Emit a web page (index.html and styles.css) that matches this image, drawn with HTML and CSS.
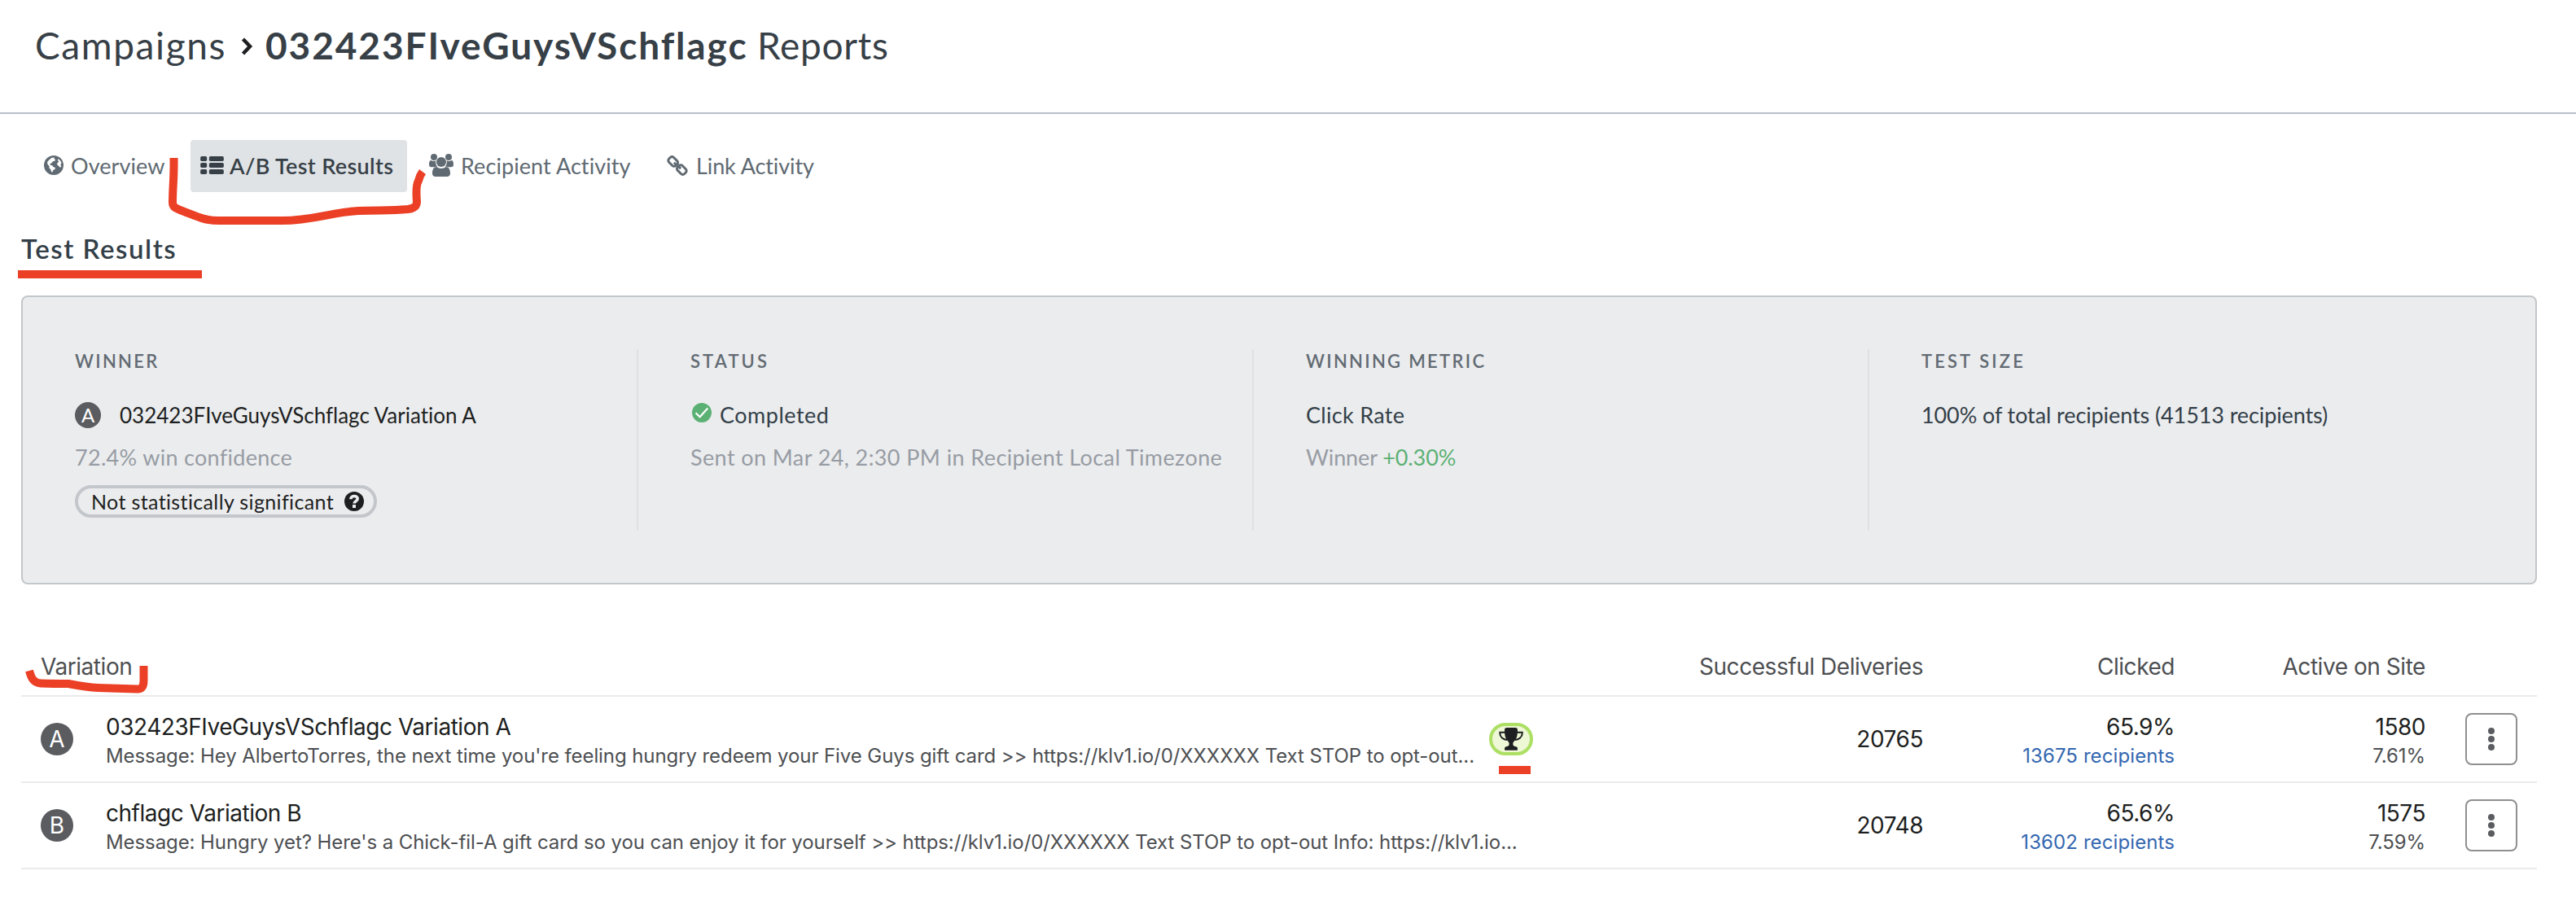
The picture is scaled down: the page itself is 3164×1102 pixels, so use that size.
FILE: index.html
```
<!DOCTYPE html>
<html lang="en">
<head>
    <meta charset="UTF-8">
    <meta name="viewport" content="width=device-width, initial-scale=1.0">
    <title>Campaign Reports</title>
    <link rel="stylesheet" href="styles.css">
</head>
<body>

    <header class="page-header">
        <h1>
            <span class="crumb">Campaigns</span>
            <svg class="chevron" viewBox="0 0 16 22"><path d="M3.500 2 L12 11 L3.500 20" fill="none" stroke="#1d1f21" stroke-width="4.5"/></svg>
            <strong>032423FIveGuysVSchflagc</strong>
            <span class="page-name">Reports</span>
        </h1>
    </header>

    <nav class="tabs">
        <a class="tab tab-overview">
            <svg width="24" height="24" viewBox="0 0 72 72">
                <circle cx="36" cy="36" r="36" fill="#606a72"/>
                <path fill="#fff" d="M28 9 L38 7 L37 12 L42 14 L40 20 L33 22 L28 28 L23 31 L23 36 L30 36 L34 42 L42 45 L40 51 L34 54 L31 62 L27 60 L25 52 L19 46 L20 40 L14 34 L12 25 L18 17 Z"/>
                <path fill="#fff" d="M52 12 L60 19 L65 28 L61 33 L64 41 L59 44 L54 38 L49 35 L49 28 L55 23 L51 18 Z"/>
            </svg>
            <span>Overview</span>
        </a>
        <a class="tab tab-results active">
            <svg width="29" height="22" viewBox="0 0 86 66" fill="#373f47">
                <rect width="24" height="18" rx="5"/><rect x="32" width="54" height="18" rx="5"/>
                <rect y="24" width="24" height="18" rx="5"/><rect x="32" y="24" width="54" height="18" rx="5"/>
                <rect y="48" width="24" height="18" rx="5"/><rect x="32" y="48" width="54" height="18" rx="5"/>
            </svg>
            <span>A/B Test Results</span>
        </a>
        <a class="tab tab-recipients">
            <svg width="30" height="28" viewBox="0 0 90 84" fill="#606a72">
                <circle cx="18" cy="12" r="12"/>
                <circle cx="72" cy="12" r="12"/>
                <circle cx="45" cy="30" r="18"/>
                <path d="M0 40 C0 30 2 24 7 24 C12 28 20 28 25 25 C23 34 26 42 31 47 C24 47 19 48 16 49 H8 C3 49 0 46 0 40 Z"/>
                <path d="M90 40 C90 30 88 24 83 24 C78 28 70 28 65 25 C67 34 64 42 59 47 C66 47 71 48 74 49 H82 C87 49 90 46 90 40 Z"/>
                <path d="M12 72 C12 58 17 48 28 48 C38 56 52 56 62 48 C73 48 78 58 78 72 C78 80 73 84 66 84 H24 C17 84 12 80 12 72 Z"/>
            </svg>
            <span>Recipient Activity</span>
        </a>
        <a class="tab tab-links">
            <svg width="26" height="25" viewBox="0 0 77 76" fill="none" stroke="#606a72" stroke-width="9">
                <rect x="4" y="10" width="36" height="25" rx="9" transform="rotate(45 22 23)"/>
                <rect x="37" y="41" width="36" height="25" rx="9" transform="rotate(45 55 53)"/>
                <path d="M26 27 L37 38"/>
                <path d="M41 39 L51 49"/>
            </svg>
            <span>Link Activity</span>
        </a>
    </nav>

    <main>
        <h2>Test Results</h2>

        <section class="summary">
            <div class="summary-col">
                <h3 class="h-winner">Winner</h3>
                <div class="line winner-line">
                    <span class="badge small">A</span>
                    <span class="winner-name">032423FIveGuysVSchflagc Variation A</span>
                </div>
                <div class="line muted confidence">72.4% win confidence</div>
                <div class="pill">
                    <span>Not statistically significant</span>
                    <svg width="24" height="24" viewBox="0 0 24 24">
                        <circle cx="12" cy="12" r="12" fill="#1d1f21"/>
                        <path d="M7.8 9.2 C8 4.2 16.2 4.4 16.2 8.8 C16.2 11.8 12 11.6 12 14.6" fill="none" stroke="#ebecee" stroke-width="3.6"/>
                        <rect x="10" y="16" width="4" height="4" fill="#ebecee"/>
                    </svg>
                </div>
            </div>
            <div class="summary-col">
                <h3 class="h-status">Status</h3>
                <div class="line status-line">
                    <svg width="24" height="24" viewBox="0 0 24 24">
                        <circle cx="12" cy="12" r="12" fill="#5bb174"/>
                        <path d="M4.5 12.2 L9.6 17.2 L19.3 6.6" fill="none" stroke="#fff" stroke-width="2.2"/>
                    </svg>
                    <span>Completed</span>
                </div>
                <div class="line muted sent">Sent on Mar 24, 2:30 PM in Recipient Local Timezone</div>
            </div>
            <div class="summary-col">
                <h3 class="h-metric">Winning Metric</h3>
                <div class="line click-rate">Click Rate</div>
                <div class="line muted metric">Winner <span class="gain">+0.30%</span></div>
            </div>
            <div class="summary-col">
                <h3 class="h-size">Test Size</h3>
                <div class="line size">100% of total recipients (41513 recipients)</div>
            </div>
        </section>

        <section class="table">
            <div class="row head">
                <div>Variation</div>
                <div class="num">Successful Deliveries</div>
                <div class="num">Clicked</div>
                <div class="num">Active on Site</div>
                <div></div>
            </div>
            <div class="row">
                <div class="variation">
                    <span class="badge">A</span>
                    <div class="stack message-a">
                        <div class="main">032423FIveGuysVSchflagc Variation A</div>
                        <div class="sub">Message: Hey AlbertoTorres, the next time you're feeling hungry redeem your Five Guys gift card &gt;&gt; https://klv1.io/0/XXXXXX Text STOP to opt-out...</div>
                    </div>
                    <span class="trophy">
                        <svg width="30" height="28" viewBox="0 0 90 84">
                            <path d="M24 17 H4 V22 C4 34 16 44 30 45 M66 17 H86 V22 C86 34 74 44 60 45" fill="none" stroke="#1d1f21" stroke-width="6"/>
                            <path d="M21 8 C21 3 24 0 29 0 H61 C66 0 69 3 69 8 C69 28 66 40 58 48 C53 53 52 56 52 60 C52 66 55 68 60 69 C66 70 69 73 69 78 V80 C69 82 68 83 66 83 H24 C22 83 21 82 21 80 V78 C21 73 24 70 30 69 C35 68 38 66 38 60 C38 56 37 53 32 48 C24 40 21 28 21 8 Z" fill="#1d1f21"/>
                        </svg>
                    </span>
                </div>
                <div class="num main">20765</div>
                <div class="num stack">
                    <div class="main">65.9%</div>
                    <div class="sub link">13675 recipients</div>
                </div>
                <div class="num stack">
                    <div class="main">1580</div>
                    <div class="sub">7.61%</div>
                </div>
                <button class="menu"><i></i><i></i><i></i></button>
            </div>
            <div class="row">
                <div class="variation">
                    <span class="badge">B</span>
                    <div class="stack message-b">
                        <div class="main">chflagc Variation B</div>
                        <div class="sub">Message: Hungry yet? Here's a Chick-fil-A gift card so you can enjoy it for yourself &gt;&gt; https://klv1.io/0/XXXXXX Text STOP to opt-out Info: https://klv1.io...</div>
                    </div>
                </div>
                <div class="num main">20748</div>
                <div class="num stack">
                    <div class="main">65.6%</div>
                    <div class="sub link">13602 recipients</div>
                </div>
                <div class="num stack">
                    <div class="main">1575</div>
                    <div class="sub">7.59%</div>
                </div>
                <button class="menu"><i></i><i></i><i></i></button>
            </div>
        </section>
    </main>

    <!-- red marker strokes drawn over the page -->
    <svg class="marks" width="3164" height="1102" viewBox="0 0 3164 1102">
        <path d="M213.5 194 C214 218 212 230 212 249 C212 254 215 256 225 259.500 C240 265 250 271 269 271 H346 C385 271 405 261 440 259 C470 258 480 259 501 257 C509 256 512 253 512 248 C511 236 511 227 514 222 C515 218 516 215 519 211"/>
        <path d="M22 337 H248"/>
        <path d="M36 824 C38 831 40 839 50 839.500 C65 840 75 840 84 840 C100 843 108 844.500 120 845 L168 846.500 C174 847 176.500 844 176.500 836 V818"/>
        <path d="M1841 946 H1880"/>
    </svg>

</body>
</html>
```
FILE: styles.css
```
* {
    box-sizing: border-box;
}

body {
    margin: 0;
    position: relative;
    background: #fff;
    font-family: Lato, sans-serif;
    color: #333f48;
}

h1, h2, h3 {
    margin: 0;
}

.page-header {
    height: 140px;
    padding: 26px 43px 0;
    border-bottom: 2px solid #b9bfc9;
}

.page-header h1 {
    display: flex;
    align-items: center;
    font-size: 46px;
    font-weight: 400;
    line-height: 60px;
    color: #373f47;
}

.crumb {
    width: 252px;
    letter-spacing: 1.6px;
}

.chevron {
    width: 16px;
    height: 22px;
    margin: 2px 15px 0 0;
}

.page-header strong {
    width: 604px;
    letter-spacing: 1.9px;
    font-variant-ligatures: none;
}

.page-name {
    letter-spacing: 0.7px;
}

.tabs {
    display: flex;
    gap: 15px;
    margin-top: 32px;
    padding-left: 42px;
}

.tab {
    display: flex;
    align-items: center;
    gap: 9px;
    height: 64px;
    padding: 0 0 2px 12px;
    border-radius: 4px;
    font-size: 27px;
    color: #606a72;
    letter-spacing: 0.08px;
    white-space: nowrap;
}

.tab-overview {
    width: 177px;
}

.tab-results {
    width: 266px;
}

.tab-recipients {
    width: 277px;
}

.tab-links {
    width: 210px;
    gap: 10px;
    letter-spacing: -0.1px;
}

.tab.active {
    background: #dfe3e6;
    color: #373f47;
    font-weight: 600;
    gap: 7px;
    letter-spacing: 0.35px;
}

main {
    padding: 0 48px 0 26px;
}

h2 {
    margin-top: 49px;
    font-size: 33px;
    font-weight: 600;
    line-height: 40px;
    letter-spacing: 1.55px;
}

.summary {
    display: grid;
    grid-template-columns: repeat(4, 756px);
    height: 355px;
    margin-top: 38px;
    padding: 64px 62px 64px 0;
    border: 2px solid #c2c7cb;
    border-radius: 8px;
    background: #ebecee;
    font-size: 27px;
}

.summary-col {
    padding-left: 64px;
    border-right: 2px solid #dfe1e4;
}

.summary-col:last-child {
    border-right: none;
}

.summary h3 {
    font-size: 22px;
    font-weight: 600;
    line-height: 29px;
    text-transform: uppercase;
    color: #626b73;
    letter-spacing: 2.3px;
    margin-bottom: 34px;
}

.summary .h-status,
.summary .h-size {
    letter-spacing: 3.1px;
}

.line {
    display: flex;
    align-items: center;
    height: 36px;
    line-height: 36px;
    white-space: pre;
    margin-bottom: 16px;
}

.winner-line {
    gap: 23px;
    color: #1d1f21;
}

.winner-name {
    font-size: 26px;
    font-variant-ligatures: none;
}

.status-line {
    gap: 10px;
    padding-left: 2px;
    letter-spacing: 0.5px;
}

.status-line svg {
    margin-bottom: 7px;
}

.muted {
    color: #979ca4;
}

.confidence {
    letter-spacing: 0.3px;
}

.click-rate {
    letter-spacing: 0.3px;
}

.sent {
    letter-spacing: 0.4px;
}

.size {
    letter-spacing: -0.1px;
}

.metric {
    letter-spacing: -0.1px;
}

.gain {
    color: #5bb174;
}

.pill {
    display: flex;
    align-items: center;
    justify-content: space-between;
    width: 371px;
    height: 40px;
    padding: 0 12px 1px 16px;
    border: 4px solid #c3c7cb;
    border-radius: 20px;
    font-size: 25px;
    letter-spacing: 0.37px;
    color: #1d1f21;
}

.badge {
    flex: none;
    width: 40px;
    border-radius: 50%;
    background: #5a5c60;
    color: #fff;
    font-size: 28px;
    line-height: 40px;
    text-align: center;
}

.badge.small {
    width: 32px;
    font-size: 24px;
    line-height: 32px;
}

.table {
    margin-top: 64px;
    font-family: Inter, sans-serif;
    font-size: 28px;
    line-height: 36px;
    color: #4d4f52;
}

.row {
    display: grid;
    grid-template-columns: 1955px 381px 309px 308px 113px;
    align-items: center;
    height: 106px;
    border-bottom: 2px solid #ebebeb;
}

.row.head {
    height: 74px;
    padding-top: 1px;
    letter-spacing: -0.45px;
}

.row > :first-child {
    padding-left: 24px;
}

.variation {
    display: flex;
    align-items: center;
}

.num {
    text-align: right;
}

.stack {
    padding-top: 5px;
    white-space: nowrap;
}

.variation .stack {
    margin-left: 40px;
}

.message-a {
    width: 1679px;
}

.main {
    color: #1d1f21;
    letter-spacing: -0.47px;
}

.sub {
    font-size: 24px;
    letter-spacing: -0.085px;
}

.link {
    color: #3467b0;
    letter-spacing: 0.1px;
}

.trophy {
    display: flex;
    align-items: center;
    justify-content: center;
    width: 54px;
    height: 40px;
    margin-left: 20px;
    border: 4px solid #acdf63;
    border-radius: 20px;
    background: #eef7d6;
}

.menu {
    display: flex;
    flex-direction: column;
    align-items: center;
    justify-content: center;
    gap: 2px;
    width: 64px;
    height: 64px;
    justify-self: end;
    padding: 0;
    border: 2px solid #8e8f91;
    border-radius: 8px;
    background: #fff;
}

.menu i {
    width: 8px;
    height: 8px;
    border-radius: 50%;
    background: #5a5c60;
}

.marks {
    position: absolute;
    top: 0;
    left: 0;
    pointer-events: none;
    fill: none;
    stroke: #eb4026;
    stroke-width: 10;
}
```
